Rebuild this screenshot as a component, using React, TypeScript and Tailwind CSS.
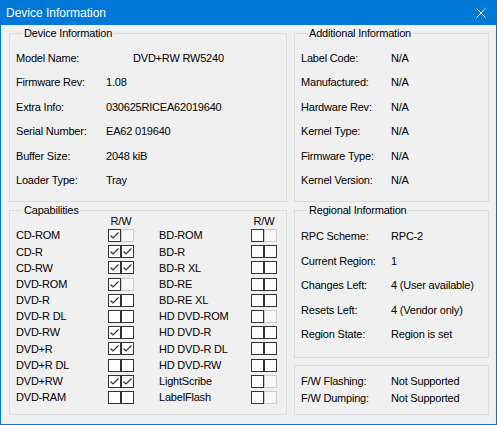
import React from 'react';

interface Pair {
  label: string;
  value: string;
}

interface Capability {
  name: string;
  read: boolean;
  write: boolean;
  writeDisabled?: boolean;
}

const deviceInfo: Pair[] = [
  { label: 'Model Name:', value: 'DVD+RW RW5240' },
  { label: 'Firmware Rev:', value: '1.08' },
  { label: 'Extra Info:', value: '030625RICEA62019640' },
  { label: 'Serial Number:', value: 'EA62 019640' },
  { label: 'Buffer Size:', value: '2048 kiB' },
  { label: 'Loader Type:', value: 'Tray' },
];

const additionalInfo: Pair[] = [
  { label: 'Label Code:', value: 'N/A' },
  { label: 'Manufactured:', value: 'N/A' },
  { label: 'Hardware Rev:', value: 'N/A' },
  { label: 'Kernel Type:', value: 'N/A' },
  { label: 'Firmware Type:', value: 'N/A' },
  { label: 'Kernel Version:', value: 'N/A' },
];

const regionalInfo: Pair[] = [
  { label: 'RPC Scheme:', value: 'RPC-2' },
  { label: 'Current Region:', value: '1' },
  { label: 'Changes Left:', value: '4 (User available)' },
  { label: 'Resets Left:', value: '4 (Vendor only)' },
  { label: 'Region State:', value: 'Region is set' },
];

const firmwareInfo: Pair[] = [
  { label: 'F/W Flashing:', value: 'Not Supported' },
  { label: 'F/W Dumping:', value: 'Not Supported' },
];

const opticalCaps: Capability[] = [
  { name: 'CD-ROM', read: true, write: false, writeDisabled: true },
  { name: 'CD-R', read: true, write: true },
  { name: 'CD-RW', read: true, write: true },
  { name: 'DVD-ROM', read: true, write: false, writeDisabled: true },
  { name: 'DVD-R', read: true, write: false },
  { name: 'DVD-R DL', read: false, write: false },
  { name: 'DVD-RW', read: true, write: false },
  { name: 'DVD+R', read: true, write: true },
  { name: 'DVD+R DL', read: false, write: false },
  { name: 'DVD+RW', read: true, write: true },
  { name: 'DVD-RAM', read: false, write: false },
];

const otherCaps: Capability[] = [
  { name: 'BD-ROM', read: false, write: false, writeDisabled: true },
  { name: 'BD-R', read: false, write: false },
  { name: 'BD-R XL', read: false, write: false },
  { name: 'BD-RE', read: false, write: false },
  { name: 'BD-RE XL', read: false, write: false },
  { name: 'HD DVD-ROM', read: false, write: false, writeDisabled: true },
  { name: 'HD DVD-R', read: false, write: false },
  { name: 'HD DVD-R DL', read: false, write: false },
  { name: 'HD DVD-RW', read: false, write: false },
  { name: 'LightScribe', read: false, write: false, writeDisabled: true },
  { name: 'LabelFlash', read: false, write: false, writeDisabled: true },
];

const Group: React.FC<{ title?: string; className?: string; children: React.ReactNode }> = ({ title, className = '', children }) => (
  <fieldset className={`border border-[#dcdcdc] min-w-0 ${className}`}>
    {title && <legend className="ml-[6px] px-[2px] leading-[13px]">{title}</legend>}
    {children}
  </fieldset>
);

const CheckBox: React.FC<{ checked: boolean; disabled?: boolean }> = ({ checked, disabled }) => (
  <span
    className={`w-[13px] h-[13px] border flex items-center justify-center ${
      disabled ? 'border-[#cccccc] bg-[#f7f7f7]' : 'border-[#333333] bg-white'
    }`}
  >
    {checked && (
      <svg width="11" height="11" viewBox="0 0 11 11">
        <path d="M1.5 5.5 L4 8 L9.5 2.5" fill="none" stroke="#333333" strokeWidth="1.2" />
      </svg>
    )}
  </span>
);

const App: React.FC = () => {
  return (
    <div className="w-[497px] h-[425px] bg-[#f0f0f0] border-x border-b border-[#0078d7] flex flex-col text-black text-[11px] tracking-[-0.2px] font-['Liberation_Sans',Arial,sans-serif]">
      {/* Title bar */}
      <div className="h-[25px] shrink-0 bg-[#0078d7] flex items-center justify-between pl-[5px] pr-[10px] text-white text-[12px] tracking-normal">
        <span>Device Information</span>
        <svg width="10" height="10" viewBox="0 0 10 10">
          <path d="M0.5 0.5 L9.5 9.5 M9.5 0.5 L0.5 9.5" stroke="#ffffff" strokeWidth="1" />
        </svg>
      </div>

      <div className="grid grid-cols-[278px_195px] gap-x-[7px] pl-[8px] pt-[1.5px]">
        {/* Device Information */}
        <Group title="Device Information" className="pl-[6px] pt-[6px] pb-[8px]">
          {deviceInfo.map((row, i) => (
            <div key={row.label} className="h-[24.5px] flex items-center">
              <span className="w-[90px]">{row.label}</span>
              <span className={i === 0 ? 'ml-[27px]' : ''}>{row.value}</span>
            </div>
          ))}
        </Group>

        {/* Additional Information */}
        <Group title="Additional Information" className="pl-[6px] pt-[6px] pb-[8px]">
          {additionalInfo.map((row) => (
            <div key={row.label} className="h-[24.5px] flex items-center">
              <span className="w-[90px]">{row.label}</span>
              <span>{row.value}</span>
            </div>
          ))}
        </Group>

        {/* Capabilities */}
        <Group title="Capabilities" className="mt-[2.5px] pl-[6px] pb-[7px]">
          <div className="flex -mt-[2.5px] h-[12px] leading-[12px]">
            <span className="w-[92px]" />
            <span className="w-[26px] text-center">R/W</span>
            <span className="w-[25px]" />
            <span className="w-[92px]" />
            <span className="w-[26px] text-center">R/W</span>
          </div>
          <div className="flex mt-[1px]">
            {[opticalCaps, otherCaps].map((list, col) => (
              <div key={col} className={`flex flex-col ${col === 1 ? 'ml-[25px]' : ''}`}>
                {list.map((cap) => (
                  <div key={cap.name} className="h-[16.2px] flex items-center">
                    <span className="w-[92px]">{cap.name}</span>
                    <CheckBox checked={cap.read} />
                    <CheckBox checked={cap.write} disabled={cap.writeDisabled} />
                  </div>
                ))}
              </div>
            ))}
          </div>
        </Group>

        <div className="flex flex-col mt-[2.5px]">
          {/* Regional Information */}
          <Group title="Regional Information" className="pl-[6px] pt-[7px] pb-[10px]">
            {regionalInfo.map((row) => (
              <div key={row.label} className="h-[24.5px] flex items-center">
                <span className="w-[90px]">{row.label}</span>
                <span>{row.value}</span>
              </div>
            ))}
          </Group>

          {/* Firmware */}
          <Group className="mt-[7px] pl-[6px] pt-[7.5px] pb-[6.5px]">
            {firmwareInfo.map((row) => (
              <div key={row.label} className="h-[17px] flex items-center">
                <span className="w-[90px]">{row.label}</span>
                <span>{row.value}</span>
              </div>
            ))}
          </Group>
        </div>
      </div>
    </div>
  );
};

export default App;
